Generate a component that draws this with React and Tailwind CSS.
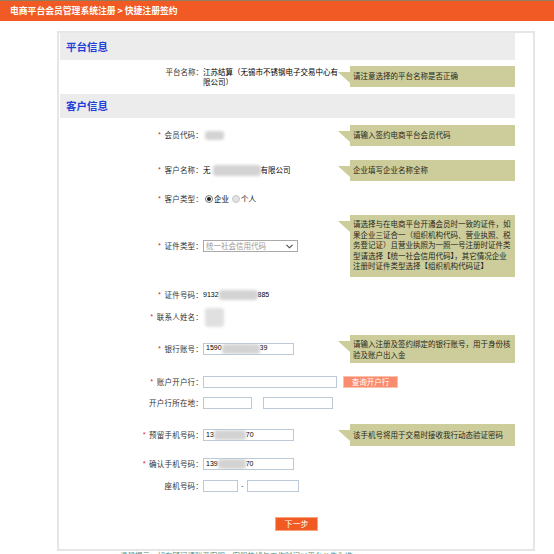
import React from "react";

const font = { fontFamily: '"Noto Sans CJK SC", "Noto Sans", sans-serif' };

function Tip({ children, className = "" }) {
  return (
    <div className={"relative ml-[12px] w-[165px] bg-[#cdcd9b] px-[3px] text-[7.5px] leading-[10.5px] text-[#26261a] " + className}>
      <svg className="absolute left-[-12px] top-[6px]" width="12" height="11" viewBox="0 0 12 11">
        <polygon points="0,0 12,0 12,11" fill="#cdcd9b" />
      </svg>
      {children}
    </div>
  );
}

function Blur({ className = "" }) {
  return <span className={"inline-block rounded-[3px] bg-[#d3d3d3] blur-[1.5px] " + className} />;
}

function Row({ className, label, req, children, tip }) {
  return (
    <div className={"flex items-center " + className}>
      <div className="w-[143px] text-right text-[7.5px] tracking-[0.2px] text-[#333]">
        {req && <span className="mr-[3px] text-[#e02020]">*</span>}
        {label}
      </div>
      <div className="flex w-[135px] items-center text-[7.5px] text-black">{children}</div>
      {tip}
    </div>
  );
}

function Input({ className = "", children }) {
  return (
    <div className={"flex h-[12px] items-center overflow-hidden border border-[#bccad8] bg-white px-[2px] text-[7px] text-black " + className} style={{ fontFamily: '"Liberation Sans", sans-serif' }}>
      {children}
    </div>
  );
}

export default function App() {
  return (
    <div className="min-h-[554px] w-[554px] overflow-hidden bg-white" style={font}>
      <div className="h-px bg-[#8f7d5c]" />
      <div className="flex h-[20px] items-center bg-[#f15a24] pl-[10px] text-[8.8px] font-bold text-white">
        电商平台会员管理系统注册 &gt; 快捷注册签约
      </div>

      <div className="ml-[57px] mt-[10px] w-[478px] border-2 border-[#e6e6e6] pb-[2px] pl-px">
        <div className="w-[455px]">
          <div className="flex h-[27px] items-center bg-[#ececec] pl-[6px] text-[10.5px] font-bold text-[#1f3fd8]">平台信息</div>

          <div className="flex h-[34px] items-start">
            <div className="w-[143px] pt-[7px] text-right text-[7.5px] leading-[10px] text-[#333]">平台名称：</div>
            <div className="w-[135px] pt-[7px] text-[7.5px] leading-[10px] text-black">江苏结算（无锡市不锈钢电子交易中心有限公司）</div>
            <Tip className="mt-[6px] flex h-[21px] items-center">请注意选择的平台名称是否正确</Tip>
          </div>

          <div className="flex h-[24px] items-center bg-[#ececec] pl-[6px] text-[10.5px] font-bold text-[#1f3fd8]">客户信息</div>

          <Row className="h-[34px]" req label="会员代码：" tip={<Tip className="flex h-[21px] items-center">请输入签约电商平台会员代码</Tip>}>
            <Blur className="ml-[2px] h-[9px] w-[19px]" />
          </Row>

          <Row className="h-[36px]" req label="客户名称：" tip={<Tip className="flex h-[21px] items-center">企业填写企业名称全称</Tip>}>
            <span>无</span>
            <Blur className="ml-[2px] h-[11px] w-[48px]" />
            <span>有限公司</span>
          </Row>

          <Row className="h-[22px]" req label="客户类型：">
            <span className="ml-[2px] flex h-[8px] w-[8px] items-center justify-center rounded-full border border-[#777] bg-white">
              <span className="h-[4px] w-[4px] rounded-full bg-[#222]" />
            </span>
            <span className="ml-[1px]">企业</span>
            <span className="ml-[3px] h-[8px] w-[8px] rounded-full border border-[#c8c8c8] bg-[#e2e2e2]" />
            <span className="ml-[1px]">个人</span>
          </Row>

          <Row
            className="h-[72px]"
            req
            label="证件类型："
            tip={
              <Tip className="whitespace-nowrap pb-[5px] pt-[4px]">
                请选择与在电商平台开通会员时一致的证件，如<br />
                果企业三证合一（组织机构代码、营业执照、税<br />
                务登记证）且营业执照为一照一号注册时证件类<br />
                型请选择【统一社会信用代码】，其它情况企业<br />
                注册时证件类型选择【组织机构代码证】
              </Tip>
            }
          >
            <div className="flex h-[12px] w-[95px] items-center justify-between border border-[#a9a9a9] bg-white pl-[2px] pr-[4px] text-[7.5px] text-[#9a9a9a]">
              <span>统一社会信用代码</span>
              <svg width="7" height="5" viewBox="0 0 7 5">
                <path d="M0.5 0.8 L3.5 3.8 L6.5 0.8" fill="none" stroke="#444" strokeWidth="1.1" />
              </svg>
            </div>
          </Row>

          <Row className="h-[26px]" req label="证件号码：">
            <span className="text-[7px]" style={{ fontFamily: '"Liberation Sans", sans-serif' }}>9132</span>
            <Blur className="h-[10px] w-[39px]" />
            <span className="text-[7px]" style={{ fontFamily: '"Liberation Sans", sans-serif' }}>885</span>
          </Row>

          <Row className="h-[18px]" req label="联系人姓名：">
            <Blur className="ml-[2px] h-[19px] w-[19px] bg-[#e0e0e0]" />
          </Row>

          <Row
            className="h-[45px]"
            req
            label="银行账号："
            tip={
              <Tip className="whitespace-nowrap py-[3px] leading-[11px]">
                请输入注册及签约绑定的银行账号，用于身份核<br />
                验及账户出入金
              </Tip>
            }
          >
            <Input className="w-[91px]">
              <span>1590</span>
              <Blur className="h-[10px] w-[38px]" />
              <span>39</span>
            </Input>
          </Row>

          <div className="flex h-[22px] items-center">
            <div className="w-[143px] text-right text-[7.5px] tracking-[0.2px] text-[#333]">
              <span className="mr-[3px] text-[#e02020]">*</span>账户开户行：
            </div>
            <Input className="w-[134px]" />
            <button className="ml-[6px] flex h-[12px] w-[55px] items-center justify-center border border-[#fcc0ab] bg-[#f98b6e] text-[7.5px] text-white">
              查询开户行
            </button>
          </div>

          <Row className="h-[20px]" label="开户行所在地：">
            <Input className="w-[49px]" />
            <Input className="ml-[11px] w-[70px] shrink-0" />
          </Row>

          <Row className="h-[44px]" req label="预留手机号码：" tip={<Tip className="flex h-[22px] items-center">该手机号将用于交易时接收我行动态验证密码</Tip>}>
            <Input className="w-[91px]">
              <span>13</span>
              <Blur className="h-[10px] w-[32px]" />
              <span>70</span>
            </Input>
          </Row>

          <Row className="h-[14px]" req label="确认手机号码：">
            <Input className="w-[91px]">
              <span>139</span>
              <Blur className="h-[10px] w-[28px]" />
              <span>70</span>
            </Input>
          </Row>

          <Row className="h-[30px]" label="座机号码：">
            <Input className="w-[35px]" />
            <span className="mx-[3px] text-[7.5px] text-[#333]">-</span>
            <Input className="w-[52px]" />
          </Row>

          <div className="flex h-[46px] items-center">
            <div className="w-[143px]" />
            <button className="ml-[72px] flex h-[14px] w-[43px] items-center justify-center border border-[#f8a57e] bg-[#f15a22] text-[8px] text-white">
              下一步
            </button>
          </div>
        </div>
      </div>
      <div className="ml-[120px] text-[7.5px] leading-[10px] text-[#4f8a78]">温馨提示：如有疑问请联系客服，客服热线与工作时间以平台公告为准。</div>
    </div>
  );
}
